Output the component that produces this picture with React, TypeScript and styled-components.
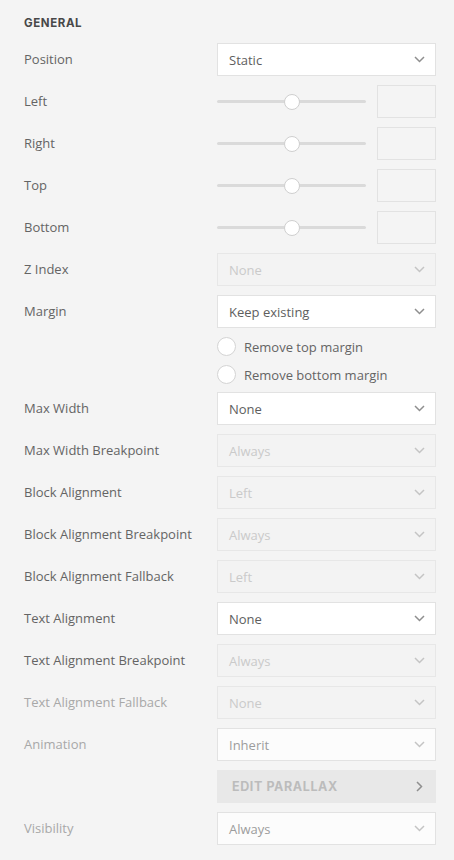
import { createGlobalStyle } from "styled-components";
import styled from "styled-components";

const GlobalStyle = createGlobalStyle`
  html, body {
    margin: 0;
    padding: 0;
    background: #f4f4f4;
  }
  body {
    font-family: "Open Sans", "Liberation Sans", sans-serif;
  }
`;

const Panel = styled.div`
  width: 454px;
  height: 860px;
  box-sizing: border-box;
  padding: 16px 18px 0 24px;
  background: #f4f4f4;
`;

const Heading = styled.h3`
  margin: 0 0 13px;
  font-family: "Inter", "Liberation Sans", sans-serif;
  font-size: 11.5px;
  font-weight: 700;
  letter-spacing: 0.6px;
  color: #484848;
  line-height: 14px;
`;

const Rows = styled.div`
  display: flex;
  flex-direction: column;
  gap: 9px;
`;

const Row = styled.div`
  display: flex;
  align-items: flex-start;
`;

const Label = styled.div<{ $faded?: boolean }>`
  width: 193px;
  flex-shrink: 0;
  height: 33px;
  line-height: 33px;
  font-size: 13px;
  color: ${(p) => (p.$faded ? "#a8a8a8" : "#646464")};
  white-space: nowrap;
`;

const Control = styled.div`
  width: 219px;
  display: flex;
  flex-direction: column;
  gap: 9px;
`;

const SelectBox = styled.div<{ $state: "on" | "off" | "dim" }>`
  height: 33px;
  box-sizing: border-box;
  display: flex;
  align-items: center;
  justify-content: space-between;
  padding: 0 10px 0 11px;
  border: 1px solid ${(p) => (p.$state === "off" ? "#e7e7e7" : "#e2e2e2")};
  background: ${(p) =>
    p.$state === "on" ? "#ffffff" : p.$state === "dim" ? "#fcfcfc" : "#f3f3f3"};
  color: ${(p) =>
    p.$state === "on" ? "#5e5e5e" : p.$state === "dim" ? "#9c9c9c" : "#cacaca"};
  font-size: 13px;
`;

const Chevron = styled.svg<{ $light?: boolean }>`
  width: 11px;
  height: 7px;
  stroke: ${(p) => (p.$light ? "#c4c4c4" : "#8f8f8f")};
  fill: none;
  stroke-width: 1.5;
`;

const SliderLine = styled.div`
  display: flex;
  align-items: center;
  gap: 11px;
`;

const Track = styled.div`
  position: relative;
  width: 150px;
  height: 3px;
  background: #dadada;
  border-radius: 2px;
`;

const Thumb = styled.span`
  position: absolute;
  top: 50%;
  width: 16px;
  height: 16px;
  margin: -8px 0 0 -8px;
  border-radius: 50%;
  border: 1px solid #cfcfcf;
  background: #fff;
  box-sizing: border-box;
`;

const NumBox = styled.div`
  width: 59px;
  height: 33px;
  box-sizing: border-box;
  border: 1px solid #e2e2e2;
  background: #f4f4f4;
`;

const Radio = styled.label`
  display: flex;
  align-items: center;
  gap: 8px;
  height: 19px;
  font-size: 13px;
  color: #646464;
  &:last-child {
    margin-bottom: -1px;
  }
`;

const Circle = styled.span`
  width: 19px;
  height: 19px;
  box-sizing: border-box;
  border-radius: 50%;
  border: 1px solid #d4d4d4;
  background: #fff;
`;

const ParallaxButton = styled.div`
  height: 33px;
  display: flex;
  align-items: center;
  justify-content: space-between;
  padding: 0 13px 0 15px;
  background: #e8e8e8;
  font-family: "Inter", "Liberation Sans", sans-serif;
  font-weight: 700;
  font-size: 12.5px;
  letter-spacing: 0.6px;
  color: #bcbcbc;
`;

type Field =
  | { kind: "select"; label: string; value: string; state: "on" | "off" | "dim"; faded?: boolean }
  | { kind: "slider"; label: string }
  | { kind: "margin"; label: string }
  | { kind: "button"; label: string };

const fields: Field[] = [
  { kind: "select", label: "Position", value: "Static", state: "on" },
  { kind: "slider", label: "Left" },
  { kind: "slider", label: "Right" },
  { kind: "slider", label: "Top" },
  { kind: "slider", label: "Bottom" },
  { kind: "select", label: "Z Index", value: "None", state: "off" },
  { kind: "margin", label: "Margin" },
  { kind: "select", label: "Max Width", value: "None", state: "on" },
  { kind: "select", label: "Max Width Breakpoint", value: "Always", state: "off" },
  { kind: "select", label: "Block Alignment", value: "Left", state: "off" },
  { kind: "select", label: "Block Alignment Breakpoint", value: "Always", state: "off" },
  { kind: "select", label: "Block Alignment Fallback", value: "Left", state: "off" },
  { kind: "select", label: "Text Alignment", value: "None", state: "on" },
  { kind: "select", label: "Text Alignment Breakpoint", value: "Always", state: "off" },
  { kind: "select", label: "Text Alignment Fallback", value: "None", state: "off", faded: true },
  { kind: "select", label: "Animation", value: "Inherit", state: "dim", faded: true },
  { kind: "button", label: "" },
  { kind: "select", label: "Visibility", value: "Always", state: "dim", faded: true },
];

function Select({ value, state }: { value: string; state: "on" | "off" | "dim" }) {
  return (
    <SelectBox $state={state}>
      <span>{value}</span>
      <Chevron $light={state !== "on"} viewBox="0 0 11 7">
        <path d="M1 1l4.5 4.5L10 1" />
      </Chevron>
    </SelectBox>
  );
}

function Slider() {
  return (
    <SliderLine>
      <Track>
        <Thumb style={{ left: "50%" }} />
      </Track>
      <NumBox />
    </SliderLine>
  );
}

export default function App() {
  return (
    <>
      <GlobalStyle />
      <Panel>
        <Heading>GENERAL</Heading>
        <Rows>
          {fields.map((f, i) => (
            <Row key={i}>
              <Label $faded={f.kind === "select" && f.faded}>{f.label}</Label>
              <Control>
                {f.kind === "select" && <Select value={f.value} state={f.state} />}
                {f.kind === "slider" && <Slider />}
                {f.kind === "margin" && (
                  <>
                    <Select value="Keep existing" state="on" />
                    <Radio>
                      <Circle />
                      Remove top margin
                    </Radio>
                    <Radio>
                      <Circle />
                      Remove bottom margin
                    </Radio>
                  </>
                )}
                {f.kind === "button" && (
                  <ParallaxButton>
                    <span>EDIT PARALLAX</span>
                    <Chevron viewBox="0 0 7 11" style={{ width: 7, height: 11 }}>
                      <path d="M1 1l4.5 4.5L1 10" />
                    </Chevron>
                  </ParallaxButton>
                )}
              </Control>
            </Row>
          ))}
        </Rows>
      </Panel>
    </>
  );
}
